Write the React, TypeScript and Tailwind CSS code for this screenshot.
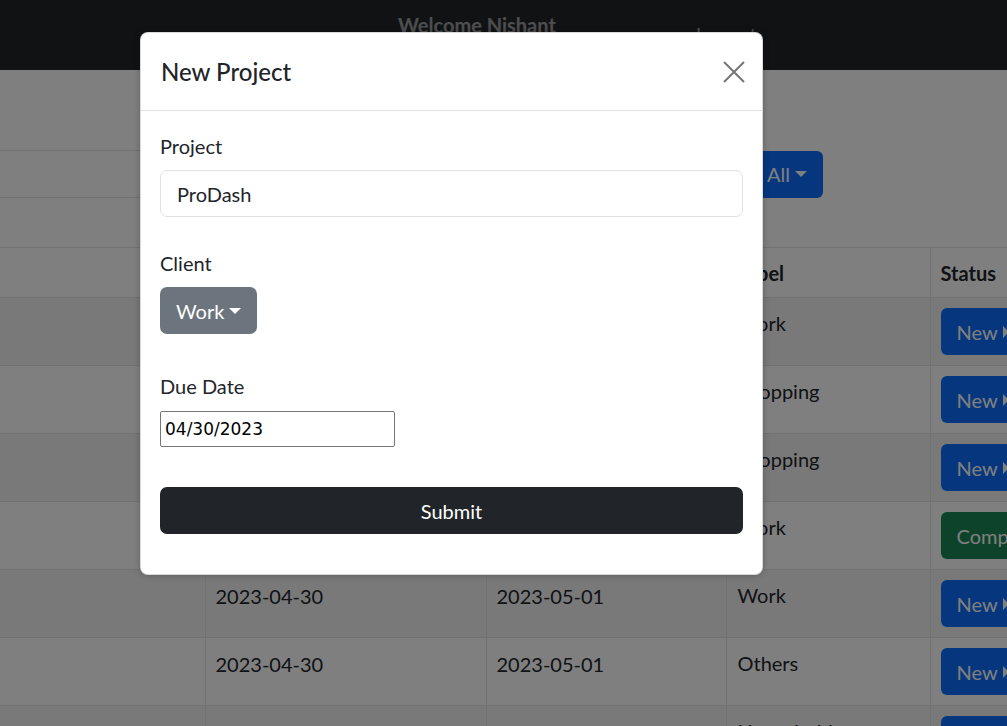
const rows = [
  { start: "", due: "", label: "Work", status: "New" },
  { start: "", due: "", label: "Shopping", status: "New" },
  { start: "", due: "", label: "Shopping", status: "New" },
  { start: "", due: "", label: "Work", status: "Completed" },
  { start: "2023-04-30", due: "2023-05-01", label: "Work", status: "New" },
  { start: "2023-04-30", due: "2023-05-01", label: "Others", status: "New" },
  { start: "2023-04-30", due: "2023-05-02", label: "Household", status: "New" },
];

// ── Bootstrap-ish carets ──────────────────────────────────
const CaretDown = () => (
  <span className="inline-block w-0 h-0 ml-[5px] align-middle border-x-[6px] border-x-transparent border-t-[6px] border-t-white" />
);
const CaretRight = () => (
  <span className="inline-block w-0 h-0 ml-[5px] align-middle border-y-[6px] border-y-transparent border-l-[6px] border-l-white" />
);

// ── Page behind the modal ─────────────────────────────────
const Dashboard = () => (
  <div className="bg-white">
    <nav className="h-[70px] bg-[#212529] flex items-start text-white/55 text-[20px]">
      <span className="ml-[398px] mt-[10px] font-bold">Welcome Nishant</span>
      <span className="ml-[140px] mt-[19px]">Logout</span>
    </nav>

    <div className="flex items-center mt-[80px] h-[48px]">
      <input
        className="w-[745px] h-[48px] border border-l-0 border-[#dee2e6] rounded-r-[6px] px-4 text-[20px] outline-none"
        readOnly
      />
      <button className="ml-[6px] h-[47px] px-4 rounded-[6px] bg-[#0d6efd] text-white text-[20px] flex items-center">
        All
        <CaretDown />
      </button>
    </div>

    <table className="mt-[49px] border-collapse text-[20px] text-[#212529] table-fixed w-[1160px]">
      <colgroup>
        <col className="w-[205px]" />
        <col className="w-[281px]" />
        <col className="w-[240px]" />
        <col className="w-[204px]" />
        <col className="w-[230px]" />
      </colgroup>
      <thead>
        <tr className="h-[50px] border-y border-[#dee2e6]">
          {["", "Start Date", "Due Date", "Label", "Status"].map((h, i) => (
            <th key={i} className={`text-left font-bold px-[10px] ${i > 0 ? "border-l border-[#dee2e6]" : ""}`}>
              {h}
            </th>
          ))}
        </tr>
      </thead>
      <tbody>
        {rows.map((r, i) => (
          <tr key={i} className={`h-[68px] border-b border-[#dee2e6] ${i % 2 === 0 ? "bg-black/5" : ""}`}>
            <td className="align-top px-[10px] pt-[10px]"></td>
            <td className="align-top px-[10px] pt-[11px] border-l border-[#dee2e6]">{r.start}</td>
            <td className="align-top px-[10px] pt-[11px] border-l border-[#dee2e6]">{r.due}</td>
            <td className="align-top px-[11px] pt-[10px] border-l border-[#dee2e6]">{r.label}</td>
            <td className="align-top px-[10px] pt-[10px] border-l border-[#dee2e6]">
              <button
                className={`h-[47px] px-4 rounded-[6px] text-white flex items-center whitespace-nowrap
                  ${r.status === "New" ? "bg-[#0d6efd]" : "bg-[#198754]"}`}
              >
                {r.status}
                <CaretRight />
              </button>
            </td>
          </tr>
        ))}
      </tbody>
    </table>
  </div>
);

// ── Modal ─────────────────────────────────────────────────
const NewProjectModal = () => (
  <div className="absolute inset-0 bg-black/50 pl-[140px] pt-[32px]">
    <div className="w-[623px] bg-white rounded-[8px] border border-black/15 shadow-[0_0_6px_rgba(0,0,0,0.25)] text-[#212529]">
      <div className="h-[78px] flex items-center justify-between pl-[20px] pr-[16px] border-b border-[#dee2e6]">
        <h5 className="text-[24px] font-medium leading-[36px]">New Project</h5>
        <button className="w-[24px] h-[24px] flex items-center justify-center">
          <svg width="22" height="22" viewBox="0 0 22 22" fill="none" stroke="#767676" strokeWidth="2">
            <path d="M1 1 L21 21 M21 1 L1 21" />
          </svg>
        </button>
      </div>

      <div className="px-[19px] pt-[20px] pb-[40px] text-[20px]">
        <label className="block leading-[30px] mb-[9px]">Project</label>
        <input
          className="w-full h-[47px] border border-[#dee2e6] rounded-[7px] px-4 outline-none"
          defaultValue="ProDash"
        />

        <label className="block leading-[30px] mt-[31px] mb-[9px]">Client</label>
        <button className="h-[47px] px-4 rounded-[7px] bg-[#6c757d] text-white flex items-center">
          Work
          <CaretDown />
        </button>

        <label className="block leading-[30px] mt-[37px] mb-[10px]">Due Date</label>
        <input
          className="w-[235px] h-[36px] border border-[#767676] rounded-[2px] px-[4px] text-[17px] text-black font-['DejaVu_Sans',sans-serif] outline-none"
          defaultValue="04/30/2023"
        />

        <button className="mt-[40px] w-full h-[47px] rounded-[7px] bg-[#212529] text-white">Submit</button>
      </div>
    </div>
  </div>
);

export default function App() {
  return (
    <div className="relative h-[726px] w-[1007px] overflow-hidden font-['Lato',sans-serif]">
      <Dashboard />
      <NewProjectModal />
    </div>
  );
}
